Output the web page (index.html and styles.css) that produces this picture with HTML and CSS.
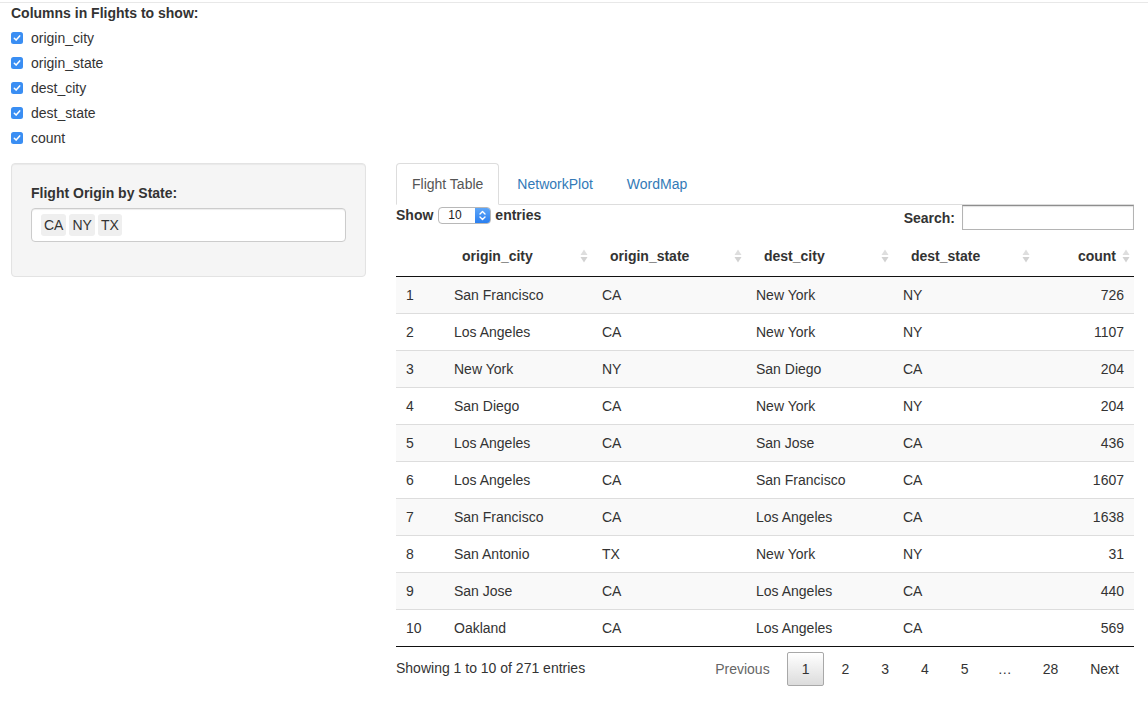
FILE: index.html
```html
<!DOCTYPE html>
<html>
<head>
<meta charset="utf-8">
<link rel="stylesheet" href="styles.css">
</head>
<body>
<div class="topline"></div>
<div class="page">
  <div class="cols">
    <div class="control-label">Columns in Flights to show:</div>
    <label class="check"><span class="cb"><svg width="12" height="12" viewBox="0 0 12 12"><rect width="12" height="12" rx="2.5" fill="#3a8ef3"/><path d="M3.3 6.2 L5.1 8.1 L8.7 3.9" stroke="#fff" stroke-width="1.5" fill="none" stroke-linecap="round" stroke-linejoin="round"/></svg></span><span>origin_city</span></label>
    <label class="check"><span class="cb"><svg width="12" height="12" viewBox="0 0 12 12"><rect width="12" height="12" rx="2.5" fill="#3a8ef3"/><path d="M3.3 6.2 L5.1 8.1 L8.7 3.9" stroke="#fff" stroke-width="1.5" fill="none" stroke-linecap="round" stroke-linejoin="round"/></svg></span><span>origin_state</span></label>
    <label class="check"><span class="cb"><svg width="12" height="12" viewBox="0 0 12 12"><rect width="12" height="12" rx="2.5" fill="#3a8ef3"/><path d="M3.3 6.2 L5.1 8.1 L8.7 3.9" stroke="#fff" stroke-width="1.5" fill="none" stroke-linecap="round" stroke-linejoin="round"/></svg></span><span>dest_city</span></label>
    <label class="check"><span class="cb"><svg width="12" height="12" viewBox="0 0 12 12"><rect width="12" height="12" rx="2.5" fill="#3a8ef3"/><path d="M3.3 6.2 L5.1 8.1 L8.7 3.9" stroke="#fff" stroke-width="1.5" fill="none" stroke-linecap="round" stroke-linejoin="round"/></svg></span><span>dest_state</span></label>
    <label class="check"><span class="cb"><svg width="12" height="12" viewBox="0 0 12 12"><rect width="12" height="12" rx="2.5" fill="#3a8ef3"/><path d="M3.3 6.2 L5.1 8.1 L8.7 3.9" stroke="#fff" stroke-width="1.5" fill="none" stroke-linecap="round" stroke-linejoin="round"/></svg></span><span>count</span></label>
  </div>

  <div class="layout">
    <aside class="well">
      <div class="control-label">Flight Origin by State:</div>
      <div class="selectize">
        <span class="chip">CA</span><span class="chip">NY</span><span class="chip">TX</span>
      </div>
    </aside>

    <main class="main">
      <ul class="tabs">
        <li class="tab active">Flight Table</li>
        <li class="tab">NetworkPlot</li>
        <li class="tab">WordMap</li>
      </ul>

      <div class="dt-top">
        <div class="length">
          <span class="bold">Show</span>
          <span class="select"><span class="sel-val">10</span><span class="sel-btn"><svg width="9" height="13" viewBox="0 0 9 13"><path d="M2 5 L4.5 2.5 L7 5 M2 8 L4.5 10.5 L7 8" stroke="#fff" stroke-width="1.4" fill="none" stroke-linecap="round" stroke-linejoin="round"/></svg></span></span>
          <span class="bold">entries</span>
        </div>
        <div class="search">
          <span class="bold">Search:</span>
          <span class="search-input"></span>
        </div>
      </div>

      <table class="dt">
        <colgroup>
          <col class="c-idx"><col class="c-oc"><col class="c-os"><col class="c-dc"><col class="c-ds"><col class="c-cnt">
        </colgroup>
        <thead>
          <tr>
            <th></th>
            <th class="sort">origin_city<svg class="si" width="8" height="14" viewBox="0 0 8 14"><path d="M4 0.5 L7.5 6 H0.5Z" fill="#dedede"/><path d="M0.5 8 H7.5 L4 13.5Z" fill="#d2d2d2"/></svg></th>
            <th class="sort">origin_state<svg class="si" width="8" height="14" viewBox="0 0 8 14"><path d="M4 0.5 L7.5 6 H0.5Z" fill="#dedede"/><path d="M0.5 8 H7.5 L4 13.5Z" fill="#d2d2d2"/></svg></th>
            <th class="sort">dest_city<svg class="si" width="8" height="14" viewBox="0 0 8 14"><path d="M4 0.5 L7.5 6 H0.5Z" fill="#dedede"/><path d="M0.5 8 H7.5 L4 13.5Z" fill="#d2d2d2"/></svg></th>
            <th class="sort">dest_state<svg class="si" width="8" height="14" viewBox="0 0 8 14"><path d="M4 0.5 L7.5 6 H0.5Z" fill="#dedede"/><path d="M0.5 8 H7.5 L4 13.5Z" fill="#d2d2d2"/></svg></th>
            <th class="sort right">count<svg class="si" width="8" height="14" viewBox="0 0 8 14"><path d="M4 0.5 L7.5 6 H0.5Z" fill="#dedede"/><path d="M0.5 8 H7.5 L4 13.5Z" fill="#d2d2d2"/></svg></th>
          </tr>
        </thead>
        <tbody>
          <tr><td>1</td><td>San Francisco</td><td>CA</td><td>New York</td><td>NY</td><td class="right">726</td></tr>
          <tr><td>2</td><td>Los Angeles</td><td>CA</td><td>New York</td><td>NY</td><td class="right">1107</td></tr>
          <tr><td>3</td><td>New York</td><td>NY</td><td>San Diego</td><td>CA</td><td class="right">204</td></tr>
          <tr><td>4</td><td>San Diego</td><td>CA</td><td>New York</td><td>NY</td><td class="right">204</td></tr>
          <tr><td>5</td><td>Los Angeles</td><td>CA</td><td>San Jose</td><td>CA</td><td class="right">436</td></tr>
          <tr><td>6</td><td>Los Angeles</td><td>CA</td><td>San Francisco</td><td>CA</td><td class="right">1607</td></tr>
          <tr><td>7</td><td>San Francisco</td><td>CA</td><td>Los Angeles</td><td>CA</td><td class="right">1638</td></tr>
          <tr><td>8</td><td>San Antonio</td><td>TX</td><td>New York</td><td>NY</td><td class="right">31</td></tr>
          <tr><td>9</td><td>San Jose</td><td>CA</td><td>Los Angeles</td><td>CA</td><td class="right">440</td></tr>
          <tr><td>10</td><td>Oakland</td><td>CA</td><td>Los Angeles</td><td>CA</td><td class="right">569</td></tr>
        </tbody>
      </table>

      <div class="dt-bottom">
        <div class="info">Showing 1 to 10 of 271 entries</div>
        <div class="paginate">
          <span class="pbtn disabled">Previous</span>
          <span class="pbtn current">1</span>
          <span class="pbtn">2</span>
          <span class="pbtn">3</span>
          <span class="pbtn">4</span>
          <span class="pbtn">5</span>
          <span class="ellipsis">…</span>
          <span class="pbtn">28</span>
          <span class="pbtn">Next</span>
        </div>
      </div>
    </main>
  </div>
</div>
</body>
</html>
```

FILE: styles.css
```css
* { box-sizing: border-box; }

html, body {
  margin: 0;
  padding: 0;
  background: #fff;
  font-family: "Liberation Sans", Arial, Helvetica, sans-serif;
  font-size: 14px;
  line-height: 20px;
  color: #333;
}

.topline {
  margin-top: 2px;
  height: 1px;
  background: #e8e8e8;
}

.page {
  padding-left: 11px;
}

.control-label {
  font-weight: bold;
  margin-bottom: 5px;
}

.cols {
  display: flex;
  flex-direction: column;
  gap: 5px;
}

.cols .control-label {
  margin-bottom: 0;
}

.check {
  display: flex;
  align-items: center;
  height: 20px;
}

.cb {
  display: inline-flex;
  width: 12px;
  height: 12px;
  margin-right: 8px;
}

.layout {
  display: grid;
  grid-template-columns: 355px 738px;
  column-gap: 30px;
  align-items: start;
  margin-top: 15px;
}

.well {
  background: #f5f5f5;
  border: 1px solid #e3e3e3;
  border-radius: 4px;
  box-shadow: inset 0 1px 1px rgba(0,0,0,0.05);
  padding: 19px 19px 34px 19px;
}

.selectize {
  height: 34px;
  border: 1px solid #cccccc;
  border-radius: 4px;
  background: #fff;
  padding: 4px 9px;
  display: flex;
  align-items: center;
  gap: 3px;
  box-shadow: inset 0 1px 1px rgba(0,0,0,0.075);
}

.chip {
  background: #efefef;
  border-radius: 3px;
  padding: 1px 3px;
  line-height: 20px;
  color: #333;
}

.tabs {
  list-style: none;
  margin: 0;
  padding: 0;
  display: flex;
  border-bottom: 1px solid #ddd;
}

.tab {
  padding: 10px 15px;
  line-height: 20px;
  margin-right: 2px;
  margin-bottom: -1px;
  border: 1px solid transparent;
  border-radius: 4px 4px 0 0;
  color: #337ab7;
}

.tab.active {
  color: #555;
  border-color: #ddd;
  border-bottom-color: #fff;
  background: #fff;
}

.dt-top {
  display: flex;
  justify-content: space-between;
  align-items: flex-start;
  height: 31px;
}

.bold { font-weight: bold; }

.length {
  display: flex;
  align-items: center;
  height: 20px;
}

.select {
  display: inline-flex;
  width: 53px;
  height: 17px;
  margin: 0 4px 0 5px;
  border: 1px solid #b8b8b8;
  border-radius: 4px;
  overflow: hidden;
  background: #fff;
  font-size: 12px;
  line-height: 15px;
}

.sel-val {
  flex: 1;
  padding-left: 9px;
  color: #222;
}

.sel-btn {
  width: 15px;
  background: linear-gradient(#5ea6f8, #2a7ff0);
  display: flex;
  align-items: center;
  justify-content: center;
}

.search {
  display: flex;
  align-items: center;
  height: 25px;
}

.search-input {
  display: inline-block;
  width: 172px;
  height: 25px;
  margin-left: 7px;
  border: 1px solid #b4b4b4;
  border-top-color: #8e8e8e;
  box-shadow: inset 0 1px 1px rgba(0,0,0,0.12);
  background: #fff;
}

.dt {
  width: 738px;
  border-collapse: collapse;
  table-layout: fixed;
}

.c-idx { width: 48px; }
.c-oc { width: 148px; }
.c-os { width: 154px; }
.c-dc { width: 147px; }
.c-ds { width: 141px; }
.c-cnt { width: 100px; }

.dt th {
  position: relative;
  text-align: left;
  font-weight: bold;
  padding: 10px 18px;
  line-height: 20px;
  border-bottom: 1px solid #111;
}

.dt th.right { text-align: right; }

.dt th .si {
  position: absolute;
  right: 4px;
  top: 50%;
  margin-top: -7px;
}

.dt td {
  padding: 8px 10px;
  line-height: 20px;
  border-top: 1px solid #ddd;
}

.dt tbody tr:first-child td { border-top: none; }

.dt tbody tr:nth-child(odd) { background: #f9f9f9; }

.dt tbody tr:last-child td { border-bottom: 1px solid #111; }

.dt td.right { text-align: right; }

.dt-bottom {
  display: flex;
  justify-content: space-between;
  align-items: flex-start;
}

.info {
  padding-top: 11px;
}

.paginate {
  display: flex;
  align-items: center;
  margin-top: 5px;
}

.pbtn {
  min-width: 21px;
  padding: 7px 14px;
  line-height: 18px;
  margin-left: 2px;
  border: 1px solid transparent;
  border-radius: 2px;
  color: #333;
  text-align: center;
}

.pbtn.disabled { color: #666; }

.pbtn.current {
  border-color: #a8a8a8;
  background: linear-gradient(#ffffff, #dcdcdc);
}

.ellipsis {
  padding: 0 14px;
  color: #333;
}
```
